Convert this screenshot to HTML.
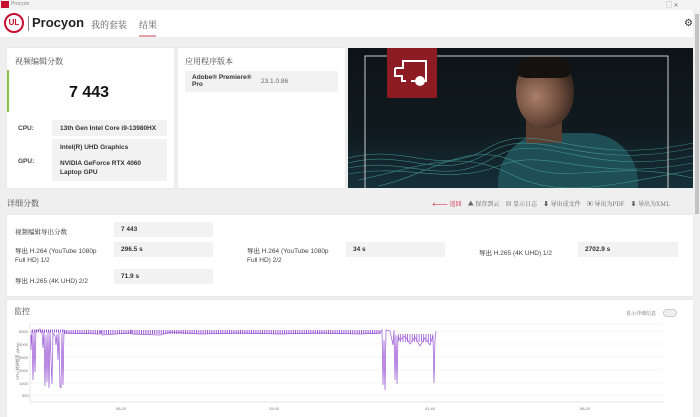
<!DOCTYPE html>
<html><head><meta charset="utf-8"><style>
*{margin:0;padding:0;box-sizing:border-box}
body{width:700px;height:417px;overflow:hidden;background:#efefef;font-family:"Liberation Sans","Noto Sans CJK SC",sans-serif;position:relative;color:#222}
.abs{position:absolute}
.card{position:absolute;background:#fff;box-shadow:0 0 2px rgba(0,0,0,.08)}
.cn{font-family:"Noto Serif CJK SC","Liberation Serif",serif}
.box{position:absolute;background:#f2f2f2;font-size:6.5px;font-weight:bold;color:#333}
.lbl{position:absolute;font-size:6.5px;color:#444}
</style></head><body>
<div class="abs" style="left:0;top:0;width:700px;height:10px;background:#f3f3f3"></div>
<div class="abs" style="left:1px;top:1px;width:8px;height:7px;background:#c8102e"></div>
<div class="abs" style="left:11px;top:1px;font-size:5px;color:#888">Procyon</div>
<div class="abs" style="left:0;top:10px;width:700px;height:27px;background:#fff"></div>
<div class="abs" style="left:4px;top:13px;width:20px;height:20px;border:2.5px solid #c8102e;border-radius:50%;font-size:8px;font-weight:bold;color:#c8102e;text-align:center;line-height:15px">UL</div>
<div class="abs" style="left:28px;top:16px;width:1px;height:15px;background:#888"></div>
<div class="abs" style="left:32px;top:15px;font-size:13px;font-weight:bold;color:#222">Procyon</div>
<div class="abs cn" style="left:91px;top:18px;font-size:9px;color:#555">我的套装</div>
<div class="abs cn" style="left:139px;top:18px;font-size:9px;color:#555">结果</div>
<div class="abs" style="left:139px;top:35px;width:17px;height:2px;background:#e8a0a8"></div>
<div class="abs" style="left:684px;top:18px;font-size:10px;color:#333">⚙</div>
<div class="abs" style="left:666px;top:0px;font-size:6px;color:#777">▢ ✕</div>

<div class="card" style="left:7px;top:48px;width:167px;height:140px">
<div class="abs cn" style="left:8px;top:8px;font-size:8px;color:#444">视频编辑分数</div>
<div class="abs" style="left:0;top:22px;width:2px;height:42px;background:#8bc34a"></div>
<div class="abs" style="left:62px;top:36px;font-size:16px;font-weight:bold;color:#111">7 443</div>
<div class="lbl" style="left:11px;top:77px;font-weight:bold">CPU:</div>
<div class="box" style="left:45px;top:72px;width:115px;height:16px;padding:5px 8px">13th Gen Intel Core i9-13980HX</div>
<div class="lbl" style="left:11px;top:110px;font-weight:bold">GPU:</div>
<div class="box" style="left:45px;top:91px;width:115px;height:42px;padding:4px 8px;line-height:9px">Intel(R) UHD Graphics<br><div style="height:7px"></div>NVIDIA GeForce RTX 4060 Laptop GPU</div>
</div>
<div class="card" style="left:178px;top:48px;width:167px;height:140px">
<div class="abs cn" style="left:7px;top:8px;font-size:8px;color:#444">应用程序版本</div>
<div class="box" style="left:7px;top:23px;width:153px;height:21px;padding:3px 7px;line-height:7px">Adobe® Premiere®<br>Pro<span style="position:absolute;left:76px;top:7px;font-weight:normal;color:#666">23.1.0.86</span></div>
</div>
<div class="abs" style="left:348px;top:48px;width:345px;height:140px;background:linear-gradient(180deg,#0d1418 0%,#101a1f 60%,#16303a 100%);overflow:hidden">
<div class="abs" style="left:150px;top:85px;width:140px;height:70px;background:#1f4e56;border-radius:50px 50px 0 0"></div>
<div class="abs" style="left:178px;top:55px;width:36px;height:40px;background:#5a3e30"></div>
<div class="abs" style="left:168px;top:10px;width:58px;height:70px;border-radius:45% 45% 50% 50%;background:radial-gradient(ellipse at 35% 55%,#a9806a 0%,#6e4c3c 45%,#2a1e1a 80%)"></div>
<div class="abs" style="left:170px;top:8px;width:52px;height:22px;border-radius:50% 50% 20% 20%;background:#14110f"></div>
<svg class="abs" style="left:0;top:0" width="345" height="140"><g fill="none" stroke="#4fb3b0" stroke-width=".6" opacity=".7">
<path d="M0 110 C60 95 90 130 140 100 S230 120 345 95"/><path d="M0 115 C60 100 90 135 140 105 S230 125 345 100"/><path d="M0 120 C60 108 95 140 145 110 S235 130 345 108"/><path d="M0 126 C60 115 100 138 150 118 S240 135 345 115"/><path d="M10 132 C70 120 110 100 160 125 S250 140 345 122"/><path d="M30 138 C80 128 120 90 170 115 S260 110 345 130"/></g>
<rect x="17" y="8" width="303" height="140" fill="none" stroke="#ccc" stroke-width="1"/>
<rect x="39" y="0" width="50" height="50" fill="#8c1b24"/>
<path d="M47 20 h8 v-7 h23 v20 h-15 M58 33 h-4 v-5 h-7 v-8" fill="none" stroke="#fff" stroke-width="2"/>
<circle cx="72" cy="33" r="5" fill="#fff"/></svg>
</div>
<div class="abs" style="left:693px;top:10px;width:7px;height:407px;background:#f0f0f0"></div>
<div class="abs" style="left:695px;top:14px;width:4px;height:200px;background:#c2c2c2"></div>

<div class="abs cn" style="left:7px;top:198px;font-size:8px;color:#444">详细分数</div>
<div class="abs cn" style="left:432px;top:199px;font-size:6px;color:#666;white-space:nowrap"><span style="color:#c8102e">🡐 返回</span>&nbsp;&nbsp;&nbsp;&nbsp;▲ 保存到云&nbsp;&nbsp;&nbsp;&nbsp;▤ 显示日志&nbsp;&nbsp;&nbsp;&nbsp;⬇ 导出成文件&nbsp;&nbsp;&nbsp;&nbsp;▣ 导出为PDF&nbsp;&nbsp;&nbsp;&nbsp;⬇ 导出为XML</div>
<div class="card" style="left:7px;top:215px;width:686px;height:81px">
<div class="lbl cn" style="left:8px;top:12px;color:#222">视频编辑导出分数</div>
<div class="box" style="left:107px;top:7px;width:99px;height:15px;padding:4px 7px">7 443</div>
<div class="lbl" style="left:8px;top:32px;line-height:9px;width:92px">导出 H.264 (YouTube 1080p Full HD) 1/2</div>
<div class="box" style="left:107px;top:27px;width:99px;height:15px;padding:4px 7px">296.5 s</div>
<div class="lbl" style="left:240px;top:32px;line-height:9px;width:92px">导出 H.264 (YouTube 1080p Full HD) 2/2</div>
<div class="box" style="left:339px;top:27px;width:99px;height:15px;padding:4px 7px">34 s</div>
<div class="lbl" style="left:472px;top:32px">导出 H.265 (4K UHD) 1/2</div>
<div class="box" style="left:571px;top:27px;width:100px;height:15px;padding:4px 7px">2702.9 s</div>
<div class="lbl" style="left:8px;top:60px">导出 H.265 (4K UHD) 2/2</div>
<div class="box" style="left:107px;top:54px;width:99px;height:15px;padding:4px 7px">71.9 s</div>
</div>

<div class="card" style="left:7px;top:300px;width:686px;height:117px">
<div class="abs cn" style="left:7px;top:6px;font-size:8px;color:#444">监控</div>
<div class="abs cn" style="left:619px;top:10px;font-size:5px;color:#666">显示详细信息</div>
<div class="abs" style="left:656px;top:9px;width:14px;height:8px;border-radius:4px;background:#eee;border:1px solid #ccc"></div>
</div>
<svg class="abs" style="left:0;top:300px" width="693" height="117">
<g stroke="#ececec" stroke-width=".5"><line x1="30" y1="24" x2="663" y2="24"/><line x1="30" y1="31" x2="663" y2="31"/><line x1="30" y1="44" x2="663" y2="44"/><line x1="30" y1="57" x2="663" y2="57"/><line x1="30" y1="70" x2="663" y2="70"/><line x1="30" y1="83" x2="663" y2="83"/><line x1="30" y1="95" x2="663" y2="95"/></g>
<line x1="30" y1="23" x2="30" y2="102" stroke="#ccc" stroke-width=".5"/><line x1="30" y1="102" x2="663" y2="102" stroke="#ccc" stroke-width=".5"/>
<g font-size="4" fill="#777" font-family="Liberation Sans"><text x="19" y="33">5000</text><text x="19" y="46">4000</text><text x="19" y="59">3000</text><text x="19" y="72">2000</text><text x="19" y="85">1000</text><text x="22" y="97">500</text>
<text x="116" y="110">08:20</text><text x="269" y="110">25:00</text><text x="425" y="110">41:40</text><text x="580" y="110">58:20</text></g>
<text x="19" y="80" font-size="4" fill="#777" transform="rotate(-90 19 80)">CPU 时钟频率 (MHz)</text>
<line x1="64" y1="32" x2="381" y2="32" stroke="#9b59d6" stroke-width="4" stroke-dasharray="1 1.2"/>
<line x1="398" y1="38" x2="433" y2="38" stroke="#9b59d6" stroke-width="8" stroke-dasharray=".8 1.5"/>
<line x1="32" y1="31" x2="64" y2="31" stroke="#9b59d6" stroke-width="3" stroke-dasharray="1 1"/>
<g fill="none" stroke="#9b59d6" stroke-width=".7">
<path d="M31 35 L31 50 L32 30 L33 80 L34 32 L35 72 L36 30 L38 31 L40 29 L42 33 L43 48 L44 31 L45 86 L46 35 L47 82 L48 32 L49 88 L50 31 L51 60 L52 84 L53 33 L55 36 L56 45 L57 34 L58 60 L59 32 L60 86 L61 88 L62 33 L63 85 L64 30 L66 33"/>
<path d="M66 33 L100 34 L101 31 L102 35 L130 33 L131 30 L132 34 L160 35 L170 32 L200 34 L240 33 L280 34 L320 33 L360 34 L380 33 L382 30 L383 85 L384 40 L385 90 L386 30 L390 31 L393 45 L394 30 L395 80 L396 35 L397 84 L398 36 L400 40 L405 36 L410 44 L415 37 L420 46 L425 38 L430 45 L433 35 L434 83 L435 40 L436 31"/>
</g>
</svg>
</body></html>
